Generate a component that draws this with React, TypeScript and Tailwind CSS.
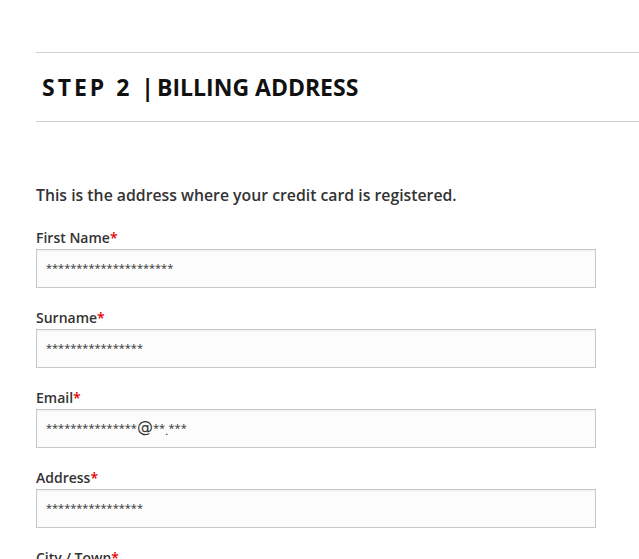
const fields: { label: string; value: React.ReactNode }[] = [
  { label: "First Name", value: "*********************" },
  { label: "Surname", value: "****************" },
  {
    label: "Email",
    value: (
      <>
        ***************
        <span className="font-['DejaVu_Sans'] text-[16px] leading-none">@</span>**
        <span className="font-['DejaVu_Sans'] relative top-[3px]">.</span>***
      </>
    ),
  },
  { label: "Address", value: "****************" },
  { label: "City / Town", value: "****************" },
];

export default function App() {
  return (
    <div className="min-h-screen overflow-hidden bg-white font-['Open_Sans',sans-serif] text-[#333]">
      <div className="pl-9 pt-[52px]">
        <div className="flex h-[70px] items-center border-y border-[#cfcfcf] pl-1.5">
          <h2 className="text-[23px] font-bold text-[#111]">
            <span className="tracking-[0.13em]">STEP 2 </span>
            <span>|</span>
            <span className="ml-[3px]">BILLING ADDRESS</span>
          </h2>
        </div>
      </div>
      <div className="w-[560px] pl-9 pt-[61px] box-content">
        <p className="text-[15.8px] font-semibold leading-6">
          This is the address where your credit card is registered.
        </p>
        <div className="mt-[21px] flex flex-col gap-5">
          {fields.map((f) => (
            <div key={f.label}>
              <label className="block text-sm font-semibold leading-[20px]">
                {f.label}
                <span className="text-[#e60000]">*</span>
              </label>
              <div className="mt-px flex h-[39px] items-center border border-[#c8c8c8] bg-[#fcfcfc] px-[9px] text-[11px] text-[#333] shadow-[inset_0_1px_2px_rgba(0,0,0,0.06)]">
                <span className="whitespace-nowrap">{f.value}</span>
              </div>
            </div>
          ))}
        </div>
      </div>
    </div>
  );
}
